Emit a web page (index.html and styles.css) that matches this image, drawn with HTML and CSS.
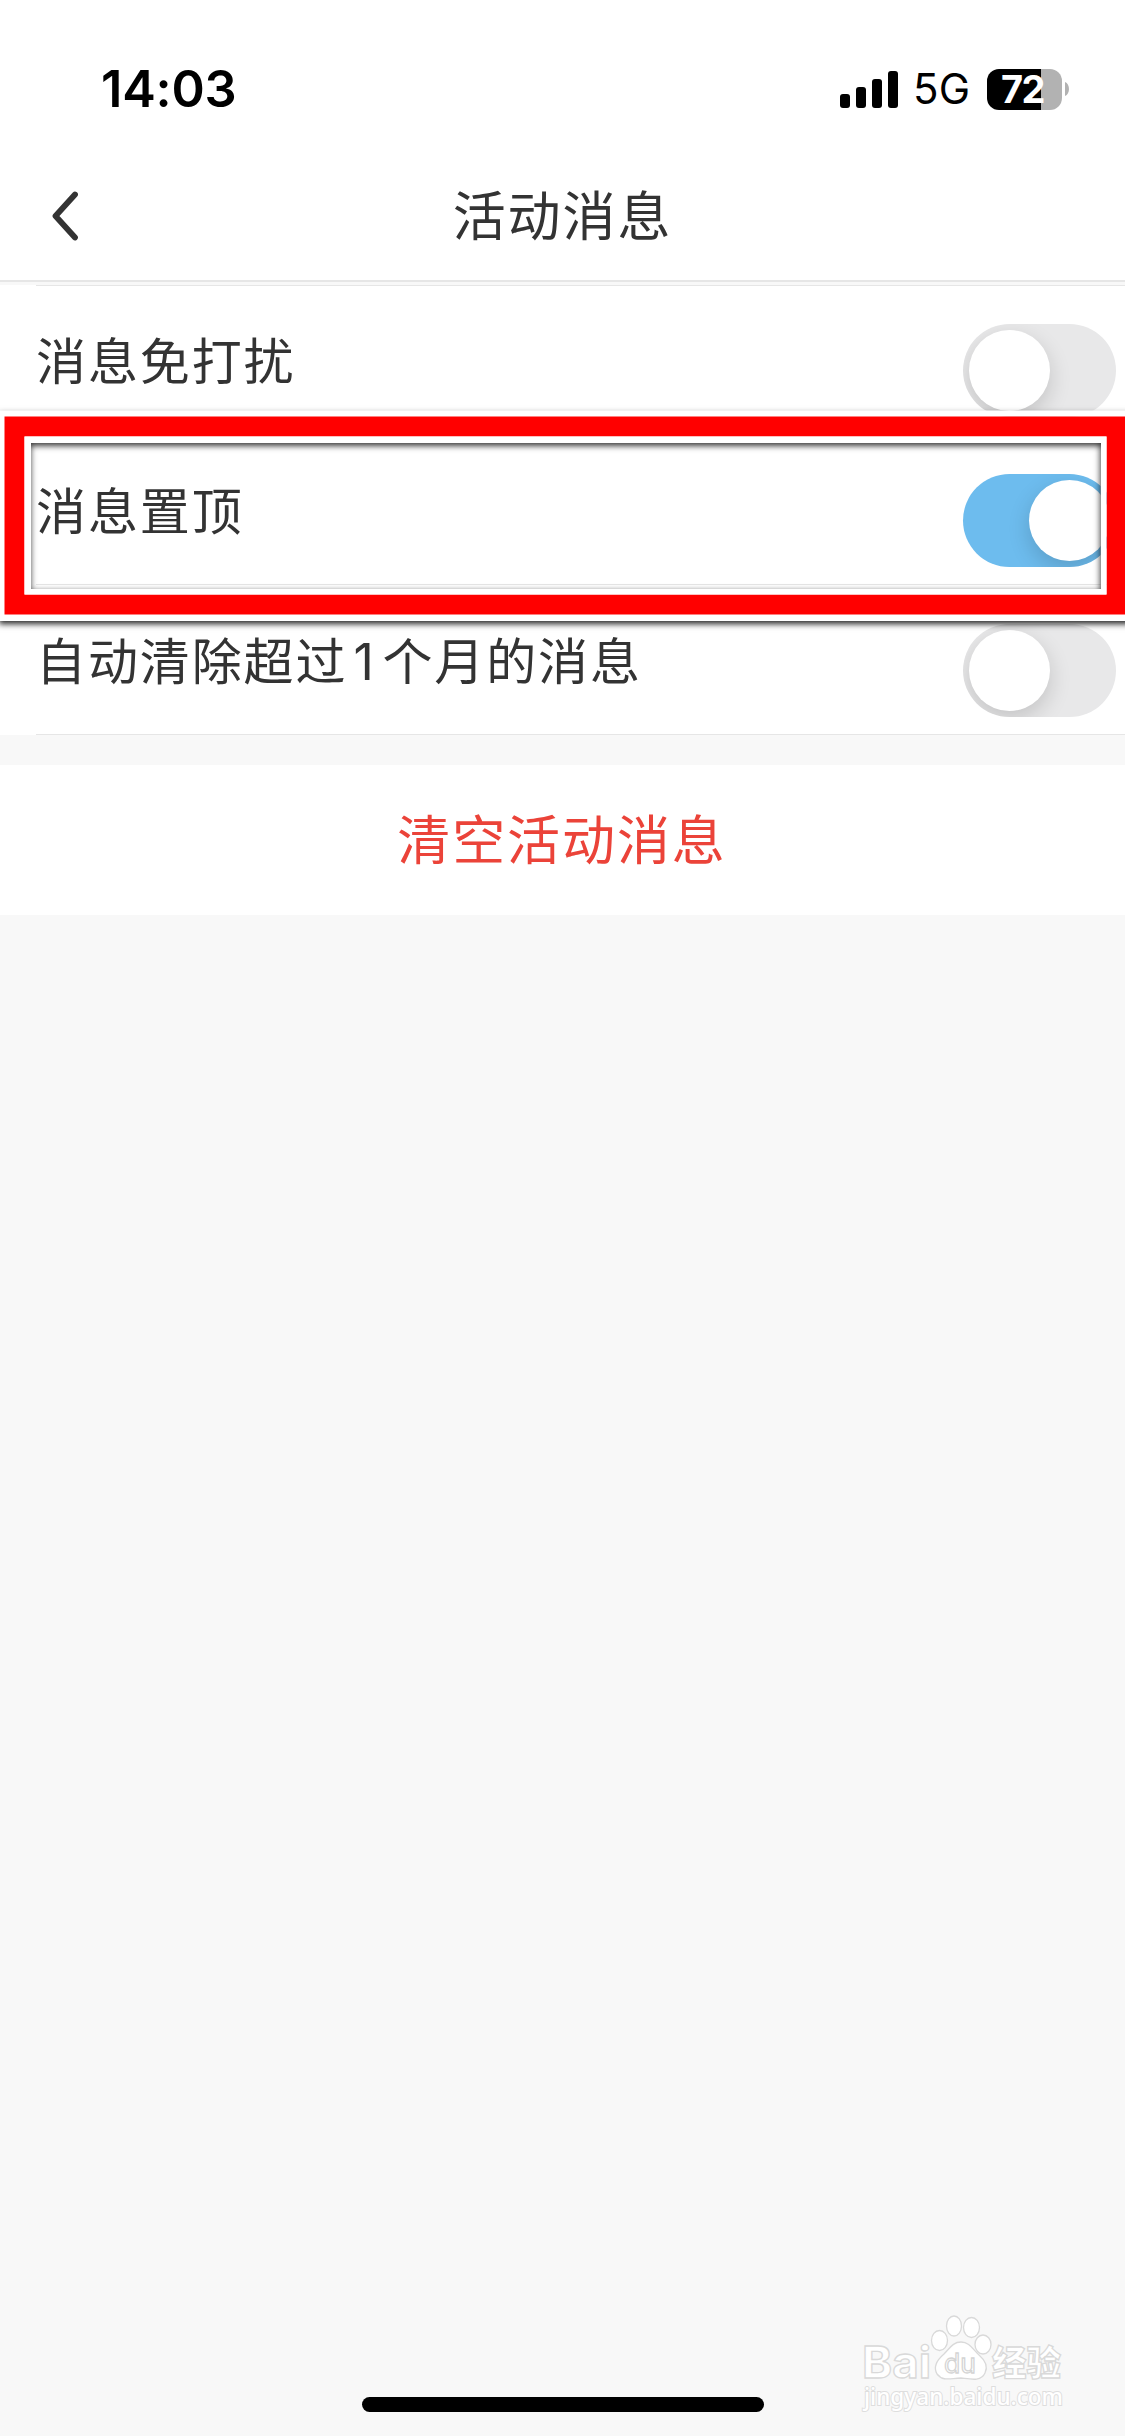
FILE: index.html
```html
<!DOCTYPE html>
<html lang="zh-CN">
<head>
<meta charset="utf-8">
<title>活动消息</title>
<link rel="stylesheet" href="styles.css">
</head>
<body>
<div class="screen">
  <header class="top">
    <div class="status">
      <span class="time">14:03</span>
      <div class="indicators">
        <svg class="signal" width="58" height="37" viewBox="0 0 58 37">
          <rect x="0" y="23" width="10" height="14" rx="3"/>
          <rect x="16" y="16" width="10" height="21" rx="3"/>
          <rect x="32" y="8" width="10" height="29" rx="3"/>
          <rect x="48" y="0" width="10" height="37" rx="3"/>
        </svg>
        <span class="network">5G</span>
        <div class="battery"><span class="level">72</span></div>
        <svg class="nub" width="4" height="14" viewBox="0 0 4 14"><path d="M0 0C5.300 2 5.300 12 0 14Z" fill="#b2b2b2"/></svg>
      </div>
    </div>
    <nav class="nav">
      <svg class="back" width="28" height="52" viewBox="0 0 28 52"><path d="M24 4.500 4.500 26 24 47.500" fill="none" stroke="#333" stroke-width="5.800" stroke-linecap="round" stroke-linejoin="round"/></svg>
      <h1 class="title">活动消息</h1>
    </nav>
  </header>
  <main class="settings">
    <div class="row"><span class="label">消息免打扰</span><span class="toggle"><i class="knob"></i></span></div>
    <div class="row"><span class="label">消息置顶</span><span class="toggle on"><i class="knob"></i></span></div>
    <div class="row"><span class="label">自动清除超过<span class="digit">1</span>个月的消息</span><span class="toggle"><i class="knob"></i></span></div>
  </main>
  <div class="clear">清空活动消息</div>
  <div class="highlight"><div class="frame"><div class="inner"></div></div></div>
  <svg class="watermark" width="210" height="105" viewBox="0 0 210 105">
    <g class="mark">
      <text class="latin" x="2" y="68" font-size="44" textLength="69" lengthAdjust="spacingAndGlyphs">Bai</text>
      <ellipse cx="79.500" cy="30.500" rx="8" ry="10"/>
      <ellipse cx="94" cy="16" rx="7.500" ry="10"/>
      <ellipse cx="111.500" cy="17.500" rx="8" ry="10"/>
      <ellipse cx="123" cy="34.500" rx="8" ry="9.500"/>
      <path d="M101 32C110 32 113 40 119 45C126 51 128 57 125 63C121 72 110 69 101 68C91 68 83 72 77 64C73 57 77 50 84 44C90 38 93 32 101 32Z"/>
      <text class="du" x="84" y="63" font-size="27" textLength="32" lengthAdjust="spacingAndGlyphs">du</text>
      <text class="han" x="132" y="66" font-size="35" textLength="69" lengthAdjust="spacingAndGlyphs">经验</text>
    </g>
    <text class="url" x="4" y="95" font-size="23" textLength="199" lengthAdjust="spacingAndGlyphs">jingyan.baidu.com</text>
  </svg>
  <div class="home"></div>
</div>
</body>
</html>
```
FILE: styles.css
```css
* { box-sizing: border-box; }
body { margin: 0; }

.screen {
  position: relative;
  display: flex;
  flex-direction: column;
  width: 1125px;
  height: 2436px;
  overflow: hidden;
  background: #f8f8f8;
  color: #333;
  font-family: "Noto Sans CJK SC", sans-serif;
}

.top {
  height: 282px;
  flex: none;
  background: #fff;
  border-bottom: 2px solid #e6e6e6;
}

.status {
  display: flex;
  justify-content: space-between;
  height: 150px;
  padding: 59px 56px 0 101px;
  color: #000;
  font-family: Inter, sans-serif;
}
.time { font-size: 50.500px; line-height: 60px; font-weight: 600; letter-spacing: -.2px; }
.indicators { display: flex; height: 60px; align-items: center; }
.signal { margin-right: 15px; }
.network { width: 74px; font-size: 42px; line-height: 62px; letter-spacing: .2px; }
.battery {
  width: 75px;
  height: 41px;
  border-radius: 12px;
  background: linear-gradient(90deg, #000 54px, #b2b2b2 54px);
  color: #fff;
  padding-right: 4px;
  text-align: center;
}
.level { font-size: 38px; line-height: 41px; font-weight: 700; letter-spacing: -1.500px; }
.nub { margin-left: 3px; }

.nav { display: grid; grid-template-columns: 51px 1fr 51px; height: 130px; }
.back { grid-column: 2; grid-row: 1; margin-top: 40px; }
.title {
  grid-column: 1 / 4;
  grid-row: 1;
  margin: 0;
  text-align: center;
  font-size: 53px;
  font-weight: 400;
  line-height: 126px;
  letter-spacing: 1.900px;
}

.settings {
  flex: none;
  height: 450px;
  margin-top: 3px;
  background: linear-gradient(#e6e6e6, #e6e6e6) 36px 0 / 1089px 1px no-repeat #fff;
}
.row {
  display: flex;
  justify-content: space-between;
  height: 150px;
  padding: 39px 9px 0 36px;
  background: linear-gradient(#e6e6e6, #e6e6e6) 36px 149px / 1089px 1px no-repeat;
}
.label { font-size: 50px; line-height: 68px; letter-spacing: 1.900px; }
.digit { display: inline-block; width: 35px; padding-left: 6px; font-family: Inter, sans-serif; line-height: 60px; letter-spacing: 0; }
.toggle { width: 153px; height: 93px; padding: 6px; border-radius: 47px; background: #e8e8e9; overflow: hidden; }
.toggle.on { background: #6dbcee; }
.knob { display: block; width: 81px; height: 81px; border-radius: 50%; background: #fff; box-shadow: 0 8px 22px rgba(0, 0, 0, .16); }
.on .knob { margin-left: 60px; }

.clear {
  flex: none;
  height: 150px;
  margin-top: 30px;
  padding-right: 1px;
  background: #fff;
  color: #eb4339;
  text-align: center;
  font-size: 53px;
  line-height: 144px;
  letter-spacing: 1.900px;
}

/* Callout drawn over the pinned-message row */
.highlight {
  position: absolute;
  left: -2px;
  top: 410px;
  width: 1134px;
  height: 210px;
  border: 6px solid #fff;
  box-shadow: 0 3px 6px rgba(0, 0, 0, .85);
  transform: translate(.5px, .5px);
}
.frame { height: 198px; border: 20px solid #f00; }
.inner { position: relative; height: 158px; border: 6px solid #fff; }
.inner::after { content: ""; position: absolute; inset: 0; box-shadow: inset 0 3px 6px rgba(0, 0, 0, .85); }

.watermark { position: absolute; left: 860px; top: 2310px; }
.mark text, .mark ellipse, .mark path { fill: #fff; stroke: #d9d9d9; stroke-width: 1.300px; }
.latin { font-family: Inter, sans-serif; font-weight: 700; }
.mark .du { font-family: Inter, sans-serif; font-weight: 400; fill: #fff; stroke: #d4d4d4; stroke-width: 1.300px; }
.han { font-family: "Noto Sans CJK SC", sans-serif; font-weight: 900; }
.url { font-family: "Noto Sans", sans-serif; font-weight: 500; fill: #fff; stroke: #dedede; stroke-width: 2px; paint-order: stroke; }

.home { width: 402px; height: 15px; margin: auto auto 24px 362px; border-radius: 8px; background: #000; }
```
